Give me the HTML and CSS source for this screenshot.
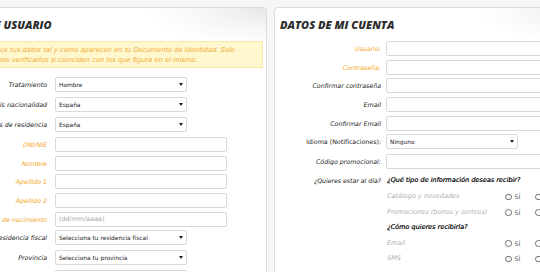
FILE: index.html
```html
<!DOCTYPE html>
<html lang="es">
<head>
<meta charset="utf-8">
<title>Registro</title>
<link rel="stylesheet" href="styles.css">
</head>
<body>
<div class="page">
  <section class="panel panel-user">
    <header class="panel-head"><h2>DATOS DE USUARIO</h2></header>
    <div class="notice">Introduce tus datos tal y como aparecen en tu Documento de Identidad. Solo<br>podremos verificarlos si coinciden con los que figura en el mismo.</div>
    <form class="form form-user">
      <div class="row row-sel"><label class="lbl">Tratamiento</label><span class="sel"><select><option>Hombre</option></select></span></div>
      <div class="row row-sel"><label class="lbl">País nacionalidad</label><span class="sel"><select><option>España</option></select></span></div>
      <div class="row row-sel"><label class="lbl">País de residencia</label><span class="sel"><select><option>España</option></select></span></div>
      <div class="row"><label class="lbl req">DNI/NIE</label><input class="txt" type="text"></div>
      <div class="row"><label class="lbl req">Nombre</label><input class="txt" type="text"></div>
      <div class="row"><label class="lbl req">Apellido 1</label><input class="txt" type="text"></div>
      <div class="row"><label class="lbl req">Apellido 2</label><input class="txt" type="text"></div>
      <div class="row"><label class="lbl req">Fecha de nacimiento</label><input class="txt" type="text" placeholder="(dd/mm/aaaa)"></div>
      <div class="row row-sel"><label class="lbl">Residencia fiscal</label><span class="sel"><select><option>Selecciona tu residencia fiscal</option></select></span></div>
      <div class="row row-sel"><label class="lbl">Provincia</label><span class="sel"><select><option>Selecciona tu provincia</option></select></span></div>
      <div class="row row-sel"><label class="lbl">Municipio</label><span class="sel"><select><option>Selecciona tu municipio</option></select></span></div>
    </form>
  </section>

  <section class="panel panel-account">
    <header class="panel-head"><h2>DATOS DE MI CUENTA</h2></header>
    <form class="form form-account">
      <div class="row"><label class="lbl req">Usuario:</label><input class="txt" type="text"></div>
      <div class="row"><label class="lbl req">Contraseña:</label><input class="txt" type="password"></div>
      <div class="row"><label class="lbl">Confirmar contraseña</label><input class="txt" type="password"></div>
      <div class="row"><label class="lbl">Email</label><input class="txt" type="text"></div>
      <div class="row"><label class="lbl">Confirmar Email</label><input class="txt" type="text"></div>
      <div class="row row-sel"><label class="lbl lbl-plain">Idioma (Notificaciones):</label><span class="sel"><select><option>Ninguno</option></select></span></div>
      <div class="row"><label class="lbl">Código promocional:</label><input class="txt" type="text"></div>
      <div class="row-q">
        <span class="lbl">¿Quieres estar al día?</span>
        <div class="prefs">
          <div class="pref-head">¿Qué tipo de información deseas recibir?</div>
          <div class="pref"><span class="pref-name">Catálogo y novedades</span><label class="opt"><input type="radio" class="radio" name="cat">SÍ</label><label class="opt"><input type="radio" class="radio" name="cat">NO</label></div>
          <div class="pref"><span class="pref-name">Promociones (bonos y sorteos)</span><label class="opt"><input type="radio" class="radio" name="pro">SÍ</label><label class="opt"><input type="radio" class="radio" name="pro">NO</label></div>
          <div class="pref-head">¿Cómo quieres recibirla?</div>
          <div class="pref"><span class="pref-name">Email</span><label class="opt"><input type="radio" class="radio" name="em">SÍ</label><label class="opt"><input type="radio" class="radio" name="em">NO</label></div>
          <div class="pref"><span class="pref-name">SMS</span><label class="opt"><input type="radio" class="radio" name="sms">SÍ</label><label class="opt"><input type="radio" class="radio" name="sms">NO</label></div>
        </div>
      </div>
    </form>
  </section>
</div>
</body>
</html>
```

FILE: styles.css
```css
* { box-sizing: border-box; }
html, body { margin: 0; padding: 0; }
body {
  width: 540px;
  height: 272px;
  overflow: hidden;
  background: #f6f6f6;
  font-family: "DejaVu Sans", "Open Sans", sans-serif;
  font-size: 6px;
  color: #333;
}
.page {
  display: flex;
  gap: 7px;
  margin-left: -57px;
  padding-top: 7px;
  width: 720px;
}
.panel {
  flex: 0 0 324px;
  height: 300px;
  background: #fff;
  border: 1px solid #dcdcdc;
  border-radius: 4px;
}
.panel-head {
  height: 33px;
  padding-left: 5px;
  display: flex;
  align-items: center;
  border-radius: 4px 4px 0 0;
  background: radial-gradient(ellipse 120px 38px at 100% 0, #e7e5e5 0%, rgba(240,238,238,0.6) 45%, rgba(255,255,255,0) 100%);
}
.panel-head h2 {
  margin: 0;
  font-family: "Open Sans", "DejaVu Sans", sans-serif;
  font-size: 11px;
  line-height: 12px;
  font-weight: 800;
  font-style: italic;
  color: #2e2e2e;
}
.notice {
  margin: 0 3px 0 3px;
  height: 27px;
  padding: 3px 5px 0 28px;
  background: #fff7cd;
  border: 1px solid #fae7a6;
  color: #f4aa36;
  font-size: 6.7px;
  line-height: 10px;
  font-style: italic;
  white-space: nowrap;
  overflow: hidden;
}
.form-user { padding-top: 9px; }
.row {
  display: flex;
  align-items: center;
  height: 15px;
  margin-bottom: 3.7px;
}
.row-sel { margin-bottom: 5px; }
.lbl {
  flex: 0 0 111px;
  text-align: right;
  font-size: 6.3px;
  font-style: italic;
  color: #222;
  white-space: nowrap;
  overflow: hidden;
}
.form-user .lbl { padding-right: 8px; }
.form-account .lbl { padding-right: 5px; }
.lbl.req { color: #f5a623; }
.lbl.lbl-plain { font-style: normal; }
.txt {
  display: block;
  width: 172px;
  height: 15px;
  margin: 0;
  border: 1px solid #d9d9d9;
  border-radius: 2px;
  padding: 0 3px;
  background: #fff;
  font-family: inherit;
  font-size: 6.4px;
  color: #333;
}
.txt::placeholder { color: #a8a8a8; }
.sel {
  position: relative;
  display: block;
  width: 132px;
  height: 15px;
}
.sel select {
  display: block;
  -webkit-appearance: none;
  appearance: none;
  width: 100%;
  height: 100%;
  margin: 0;
  border: 1px solid #d9d9d9;
  border-radius: 2px;
  padding: 0 3px;
  background: #fff;
  font-family: inherit;
  font-size: 5.9px;
  color: #222;
}
.sel::after {
  content: "";
  position: absolute;
  right: 4px;
  top: 6px;
  border-top: 3px solid #222;
  border-left: 2.5px solid transparent;
  border-right: 2.5px solid transparent;
}
.row-q {
  display: flex;
  align-items: flex-start;
  margin-top: 4px;
}
.row-q > .lbl { line-height: 15.6px; font-size: 6.2px; }
.prefs { padding-left: 1px; }
.pref-head, .pref {
  height: 15.6px;
  line-height: 15.6px;
  font-size: 6.5px;
  white-space: nowrap;
}
.pref-head {
  font-style: italic;
  color: #222;
  text-shadow: 0.25px 0 0 #222;
}
.pref { display: flex; align-items: center; }
.pref-name {
  flex: 0 0 118px;
  font-style: italic;
  color: #b0b0b0;
}
.opt {
  display: flex;
  align-items: center;
  gap: 3px;
  width: 30px;
  font-size: 6.3px;
  color: #555;
}
.radio {
  -webkit-appearance: none;
  appearance: none;
  width: 6.5px;
  height: 6.5px;
  margin: 0;
  border: 1px solid #707070;
  border-radius: 50%;
  background: #fff;
}
```
